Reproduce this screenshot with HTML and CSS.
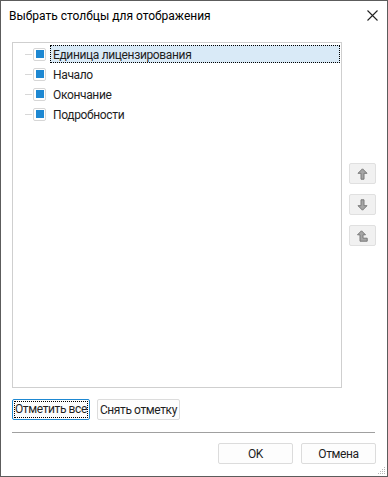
FILE: index.html
```html
<!DOCTYPE html>
<html>
<head>
  <meta charset="utf-8">
  <title>Выбрать столбцы для отображения</title>
  <link rel="stylesheet" href="styles.css">
</head>
<body>
  <div class="dialog">
    <div class="title-bar">
      <span class="title-text">Выбрать столбцы для отображения</span>
      <span class="close-btn">
        <svg width="11" height="11" viewBox="0 0 11 11"><path d="M0.5 0.5 L10.5 10.5 M10.5 0.5 L0.5 10.5" stroke="#222" stroke-width="1.1" fill="none"/></svg>
      </span>
    </div>
    <div class="dialog-body">
      <div class="main-area">
        <div class="column-list">
          <div class="tree-row selected">
            <span class="tree-line"></span>
            <span class="check"><span class="check-mark"></span></span>
            <span class="row-label">Единица лицензирования</span>
          </div>
          <div class="tree-row">
            <span class="tree-line"></span>
            <span class="check"><span class="check-mark"></span></span>
            <span class="row-label">Начало</span>
          </div>
          <div class="tree-row">
            <span class="tree-line"></span>
            <span class="check"><span class="check-mark"></span></span>
            <span class="row-label">Окончание</span>
          </div>
          <div class="tree-row">
            <span class="tree-line"></span>
            <span class="check"><span class="check-mark"></span></span>
            <span class="row-label">Подробности</span>
          </div>
        </div>
        <div class="move-buttons">
          <button class="move-btn">
            <svg width="11" height="12" viewBox="0 0 11 12"><path d="M5.5 0.8 L10 5.3 L7 5.3 L7 11.2 L4 11.2 L4 5.3 L1 5.3 Z" fill="#a6a6a6" stroke="#7a7a7a" stroke-width="1" stroke-linejoin="miter"/></svg>
          </button>
          <button class="move-btn">
            <svg width="11" height="12" viewBox="0 0 11 12"><path d="M5.5 11.2 L10 6.7 L7 6.7 L7 0.8 L4 0.8 L4 6.7 L1 6.7 Z" fill="#a6a6a6" stroke="#7a7a7a" stroke-width="1" stroke-linejoin="miter"/></svg>
          </button>
          <button class="move-btn">
            <svg width="11" height="12" viewBox="0 0 11 12"><path d="M4.5 0.8 L8.5 4.8 L6 4.8 L6 8.2 L10.2 8.2 L10.2 11.2 L3 11.2 L3 4.8 L0.5 4.8 Z" fill="#a6a6a6" stroke="#7a7a7a" stroke-width="1" stroke-linejoin="miter"/></svg>
          </button>
        </div>
      </div>
      <div class="mark-buttons">
        <button class="btn focused"><span class="focus-rect">Отметить все</span></button>
        <button class="btn">Снять отметку</button>
      </div>
      <div class="separator"></div>
      <div class="dialog-buttons">
        <button class="btn dialog-btn">OK</button>
        <button class="btn dialog-btn">Отмена</button>
      </div>
    </div>
    <svg class="grip" width="8" height="8" viewBox="0 0 8 8">
      <rect x="6" y="0" width="1" height="1" fill="#b5b5b5"/>
      <rect x="4" y="2" width="1" height="1" fill="#b5b5b5"/>
      <rect x="6" y="2" width="1" height="1" fill="#b5b5b5"/>
      <rect x="2" y="4" width="1" height="1" fill="#b5b5b5"/>
      <rect x="4" y="4" width="1" height="1" fill="#b5b5b5"/>
      <rect x="6" y="4" width="1" height="1" fill="#b5b5b5"/>
      <rect x="0" y="6" width="1" height="1" fill="#b5b5b5"/>
      <rect x="2" y="6" width="1" height="1" fill="#b5b5b5"/>
      <rect x="4" y="6" width="1" height="1" fill="#b5b5b5"/>
      <rect x="6" y="6" width="1" height="1" fill="#b5b5b5"/>
    </svg>
  </div>
</body>
</html>
```

FILE: styles.css
```css
body {
  margin: 0;
  font-family: Roboto, "Noto Sans", sans-serif;
  font-size: 12px;
  color: #1e1e1e;
  background: #fff;
}
.dialog {
  position: relative;
  width: 388px;
  height: 477px;
  box-sizing: border-box;
  border: 1px solid #5c5c5c;
  background: #fff;
  display: flex;
  flex-direction: column;
}
.title-bar {
  height: 29px;
  display: flex;
  align-items: center;
  justify-content: space-between;
  padding: 0 9px 0 8px;
  flex-shrink: 0;
}
.title-text {
  font-size: 12px;
  color: #000;
}
.close-btn {
  display: flex;
  align-items: center;
}
.dialog-body {
  flex: 1;
  display: flex;
  flex-direction: column;
  padding: 12px 11px 0 11px;
}
.main-area {
  display: flex;
  gap: 7px;
}
.column-list {
  width: 330px;
  height: 346px;
  box-sizing: border-box;
  border: 1px solid #cfcfcf;
  padding-top: 1px;
  letter-spacing: -0.35px;
}
.tree-row {
  height: 20px;
  display: flex;
  align-items: center;
}
.tree-line {
  width: 7px;
  height: 1px;
  background: #d8d8d8;
  margin-left: 12px;
  margin-right: 1px;
}
.check {
  width: 13px;
  height: 13px;
  box-sizing: border-box;
  border: 1px solid #d6d6d6;
  border-radius: 2px;
  background: #fff;
  display: flex;
  align-items: center;
  justify-content: center;
}
.check-mark {
  width: 8px;
  height: 8px;
  background: #1e88d2;
}
.row-label {
  margin-left: 4px;
  padding: 0 2px;
  height: 18px;
  line-height: 18px;
  box-sizing: border-box;
  border: 1px solid transparent;
}
.tree-row.selected .row-label {
  flex: 1;
  margin-right: 1px;
  background: #d9eaf7;
  border: 1px dotted #000;
}
.move-buttons {
  display: flex;
  flex-direction: column;
  gap: 10px;
  padding-top: 121px;
}
.move-btn {
  width: 27px;
  height: 21px;
  box-sizing: border-box;
  border: 1px solid #e0e0e0;
  border-radius: 2px;
  background: #f1f1f1;
  padding: 0;
  display: flex;
  align-items: center;
  justify-content: center;
}
.btn {
  font-family: inherit;
  font-size: 12px;
  letter-spacing: -0.4px;
  color: #1e1e1e;
  height: 21px;
  box-sizing: border-box;
  border: 1px solid #dcdcdc;
  border-radius: 2px;
  background: #fdfdfd;
  padding: 0 2px;
  display: flex;
  align-items: center;
  justify-content: center;
}
.mark-buttons {
  display: flex;
  gap: 7px;
  margin-top: 11px;
}
.btn.focused {
  border-color: #1e88d2;
  padding: 1px;
}
.focus-rect {
  border: 1px dotted #000;
  height: 17px;
  line-height: 15px;
  box-sizing: border-box;
  padding: 0;
  display: block;
}
.separator {
  height: 1px;
  background: #a0a0a0;
  margin-top: 12px;
  margin-right: 1px;
}
.dialog-buttons {
  display: flex;
  justify-content: flex-end;
  gap: 8px;
  margin-top: 10px;
}
.dialog-btn {
  width: 75px;
}
.grip {
  position: absolute;
  right: 1px;
  bottom: 1px;
}
```
